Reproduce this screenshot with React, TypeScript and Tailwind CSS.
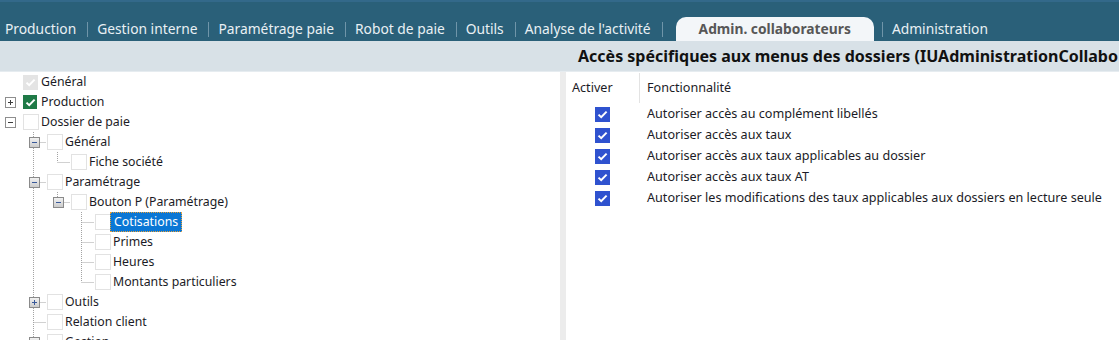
import React from "react";

type Check = "disabled" | "green" | "empty";
type Row = {
  label: string;
  level: number;
  exp?: "+" | "-";
  check: Check;
  cont: number[];
  next: boolean;
  selected?: boolean;
};

const rows: Row[] = [
  { label: "Général", level: 0, check: "disabled", cont: [], next: true },
  { label: "Production", level: 0, exp: "+", check: "green", cont: [], next: true },
  { label: "Dossier de paie", level: 0, exp: "-", check: "empty", cont: [], next: true },
  { label: "Général", level: 1, exp: "-", check: "empty", cont: [], next: true },
  { label: "Fiche société", level: 2, check: "empty", cont: [1], next: false },
  { label: "Paramétrage", level: 1, exp: "-", check: "empty", cont: [], next: true },
  { label: "Bouton P (Paramétrage)", level: 2, exp: "-", check: "empty", cont: [1], next: false },
  { label: "Cotisations", level: 3, check: "empty", cont: [1], next: true, selected: true },
  { label: "Primes", level: 3, check: "empty", cont: [1], next: true },
  { label: "Heures", level: 3, check: "empty", cont: [1], next: true },
  { label: "Montants particuliers", level: 3, check: "empty", cont: [1], next: false },
  { label: "Outils", level: 1, exp: "+", check: "empty", cont: [], next: true },
  { label: "Relation client", level: 1, check: "empty", cont: [], next: true },
  { label: "Gestion", level: 1, exp: "+", check: "empty", cont: [], next: true },
];

const features = [
  "Autoriser accès au complément libellés",
  "Autoriser accès aux taux",
  "Autoriser accès aux taux applicables au dossier",
  "Autoriser accès aux taux AT",
  "Autoriser les modifications des taux applicables aux dossiers en lecture seule",
];

function CheckMark({ color = "white" }: { color?: string }) {
  return (
    <svg width="11" height="9" viewBox="0 0 11 9">
      <path d="M1.5 4.6 L4.2 7.2 L9.6 1.6" fill="none" stroke={color} strokeWidth="2" />
    </svg>
  );
}

function TreeCheck({ kind }: { kind: Check }) {
  if (kind === "disabled")
    return (
      <div className="w-[15px] h-[15px] bg-[#e4e4e4] flex items-center justify-center">
        <CheckMark />
      </div>
    );
  if (kind === "green")
    return (
      <div className="w-[14px] h-[14px] bg-[#1f7a47] flex items-center justify-center">
        <CheckMark />
      </div>
    );
  return <div className="w-[16px] h-[16px] bg-white border border-[#e2e2e2]" />;
}

function Guides({ r }: { r: Row }) {
  const W = r.level * 24 + 23;
  const lines: React.ReactNode[] = [];
  r.cont.forEach((k) => {
    const x = k * 24 + 9.5;
    lines.push(<line key={"c" + k} x1={x} y1={0} x2={x} y2={20} />);
  });
  if (r.level >= 1) {
    const x = r.level * 24 + 9.5;
    lines.push(<line key="v" x1={x} y1={0} x2={x} y2={r.next ? 20 : 10} />);
    lines.push(<line key="h" x1={x} y1={10.5} x2={W - 1} y2={10.5} />);
  }
  const bx = r.level * 24 + 5;
  return (
    <svg width={W} height={20} className="shrink-0">
      <g stroke="#a3a3a3" strokeWidth="1" strokeDasharray="1 1">{lines}</g>
      {r.exp && r.level === 0 && (
        <g>
          <rect x={bx + 0.5} y={5.5} width={10} height={10} fill="white" stroke="#8e8e8e" />
          <line x1={bx + 3} y1={10.5} x2={bx + 8} y2={10.5} stroke="#3c3c3c" />
          {r.exp === "+" && <line x1={bx + 5.5} y1={8} x2={bx + 5.5} y2={13} stroke="#3c3c3c" />}
        </g>
      )}
      {r.exp && r.level > 0 && (
        <g>
          <defs>
            <linearGradient id="eg" x1="0" y1="0" x2="0" y2="1">
              <stop offset="0" stopColor="#f4f4f4" />
              <stop offset="1" stopColor="#c9c9c9" />
            </linearGradient>
          </defs>
          <rect x={bx + 0.5} y={5.5} width={10} height={10} fill="url(#eg)" stroke="#8a8a8a" />
          <line x1={bx + 3} y1={10.5} x2={bx + 8} y2={10.5} stroke="#3a5a9a" />
          {r.exp === "+" && <line x1={bx + 5.5} y1={8} x2={bx + 5.5} y2={13} stroke="#3a5a9a" />}
        </g>
      )}
    </svg>
  );
}

function Sep({ ml = "ml-[11px]", mr = "mr-[9px]" }: { ml?: string; mr?: string }) {
  return <div className={`w-px h-[15px] bg-[#6f95a9] ${ml} ${mr}`} />;
}

export default function App() {
  return (
    <div
      className="w-[1119px] h-[340px] overflow-hidden bg-white flex flex-col"
      style={{ fontFamily: '"Noto Sans", "Liberation Sans", sans-serif' }}
    >
      {/* Top tab bar */}
      <div className="h-[41px] shrink-0 bg-[#2a6079] border-t-2 border-[#33698a] flex items-end pl-[5px] text-[13.8px] text-[#e9f0f4]">
        <div className="h-[24px] flex items-center whitespace-nowrap">
          <span>Production</span>
          <Sep />
          <span>Gestion interne</span>
          <Sep />
          <span>Paramétrage paie</span>
          <Sep />
          <span>Robot de paie</span>
          <Sep />
          <span>Outils</span>
          <Sep />
          <span>Analyse de l'activité</span>
          <Sep ml="ml-[11px]" mr="mr-[13px]" />
        </div>
        <div className="h-[24px] px-[23px] bg-[#f3f6f9] rounded-t-[10px] flex items-center font-bold text-[#575757] whitespace-nowrap">
          Admin. collaborateurs
        </div>
        <div className="h-[24px] flex items-center whitespace-nowrap">
          <Sep ml="ml-[8px]" mr="mr-[9px]" />
          <span>Administration</span>
        </div>
      </div>

      {/* Sub header */}
      <div className="h-[31px] shrink-0 bg-[#d8e1e7] border-b border-[#e6ecf0] flex items-center overflow-hidden">
        <div className="w-[578px] shrink-0" />
        <div className="text-[16px] font-bold text-[#111] whitespace-nowrap">
          Accès spécifiques aux menus des dossiers (IUAdministrationCollabo
        </div>
      </div>

      {/* Content */}
      <div className="flex-1 flex min-h-0">
        <div className="w-[560px] shrink-0 bg-white text-[12.3px] text-[#1b1b26] overflow-hidden">
          {rows.map((r, i) => (
            <div key={i} className="h-[20px] flex items-center">
              <Guides r={r} />
              <div className="w-[18px] shrink-0 flex items-center">
                <TreeCheck kind={r.check} />
              </div>
              {r.selected ? (
                <span className="ml-[-3px] px-[3px] h-[20px] flex items-center bg-[#0a77d5] text-white border border-dotted border-[#e8a13a] whitespace-nowrap">
                  {r.label}
                </span>
              ) : (
                <span className="whitespace-nowrap">{r.label}</span>
              )}
            </div>
          ))}
        </div>
        <div className="w-[6px] shrink-0 bg-[#ececec]" />
        <div className="flex-1 bg-white text-[12.6px] text-[#1b1b26]">
          <div className="h-[32px] flex">
            <div className="w-[73px] shrink-0 pl-[6px] flex items-center">Activer</div>
            <div className="w-px bg-[#e3e3e3] my-[1px]" />
            <div className="pl-[7px] flex items-center">Fonctionnalité</div>
          </div>
          {features.map((f, i) => (
            <div key={i} className="h-[21px] flex items-center">
              <div className="w-[73px] shrink-0 flex justify-center">
                <div className="w-[15px] h-[15px] bg-[#2f52cf] flex items-center justify-center">
                  <CheckMark />
                </div>
              </div>
              <div className="pl-[8px] whitespace-nowrap">{f}</div>
            </div>
          ))}
        </div>
      </div>
    </div>
  );
}
